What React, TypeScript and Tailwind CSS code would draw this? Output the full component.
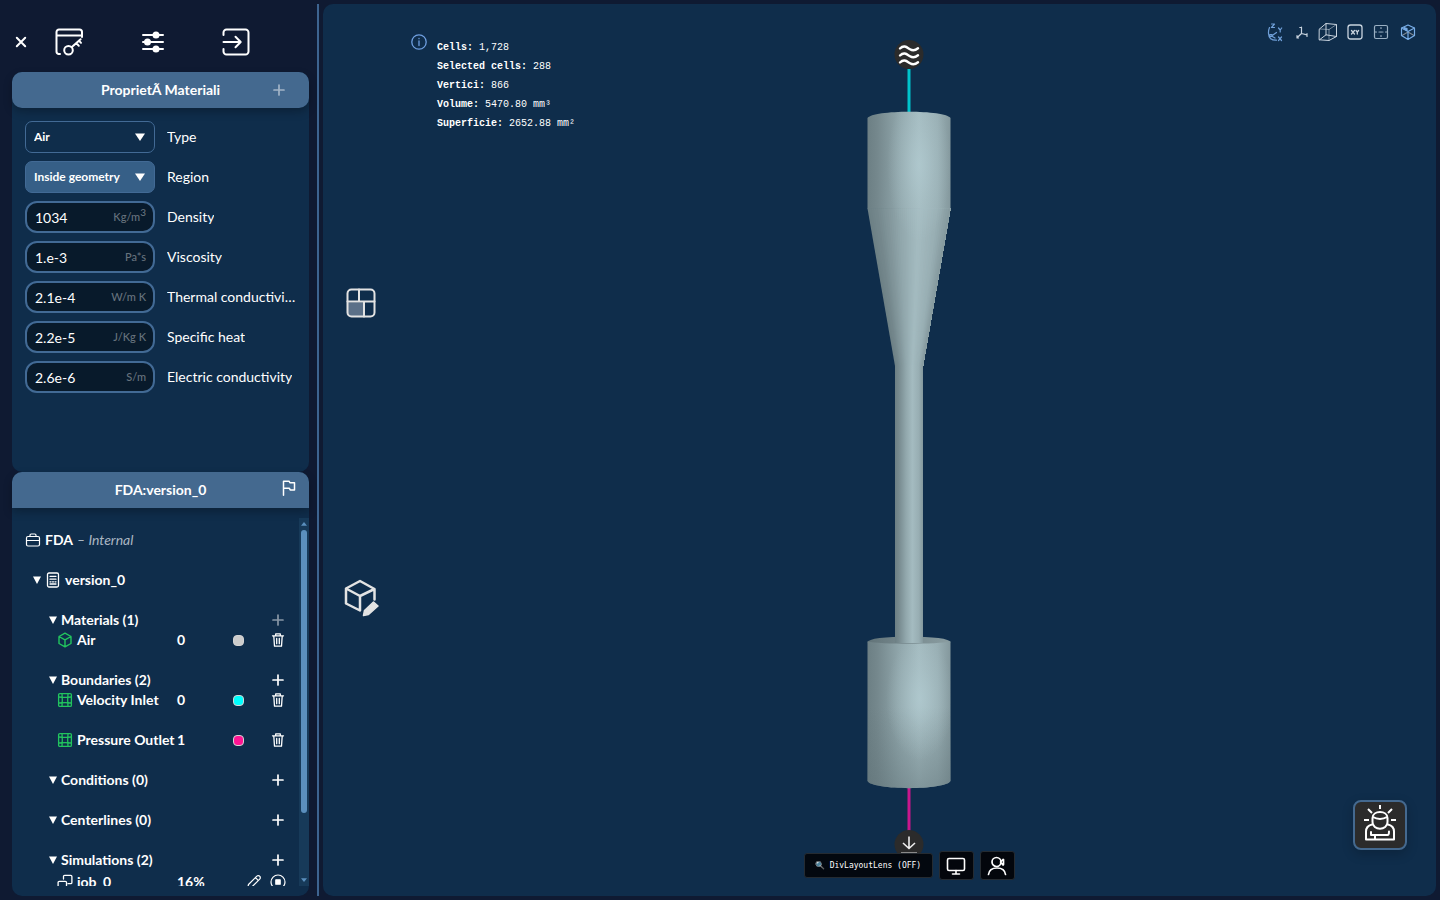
import type { ReactNode } from "react";

type IconProps = { children: ReactNode; box?: string; className?: string; width?: number };

function Icon({ children, box = "0 0 24 24", className = "size-5", width = 2 }: IconProps) {
  return (
    <svg
      viewBox={box}
      className={`shrink-0 ${className}`}
      fill="none"
      stroke="currentColor"
      strokeWidth={width}
      strokeLinecap="round"
      strokeLinejoin="round"
      aria-hidden="true"
    >
      {children}
    </svg>
  );
}

const Plus = ({ className = "size-3" }: { className?: string }) => (
  <Icon box="0 0 12 12" className={className} width={1.7}>
    <path d="M6 1v10M1 6h10" />
  </Icon>
);

const Caret = ({ className = "size-2" }: { className?: string }) => (
  <svg viewBox="0 0 10 8" className={`shrink-0 ${className}`} preserveAspectRatio="none" fill="currentColor" aria-hidden="true">
    <path d="M0 .4h10L5 8z" />
  </svg>
);

const Trash = () => (
  <Icon box="0 0 14 16" className="h-4 w-3.5" width={1.3}>
    <path d="M1.5 3.8h11M4.7 3.6V1.8h4.6v1.8M2.8 4l.7 10.2h7L11.2 4M5.7 6.5v5.2M8.3 6.5v5.2" />
  </Icon>
);

const Cube = () => (
  <Icon box="0 0 16 16" className="size-4" width={1.4}>
    <path d="M8 1.2l6 3.3v7L8 14.8l-6-3.3v-7zM2 4.5l6 3.3 6-3.3M8 7.8v7" />
  </Icon>
);

const Mesh = () => (
  <Icon box="0 0 16 16" className="size-4" width={1.3}>
    <rect x="1.6" y="1.6" width="12.8" height="12.8" rx="1.2" />
    <path d="M5 1.600c.4 4 .4 8.800 0 12.800M11 1.600c-.4 4-.4 8.800 0 12.800M1.600 5c4 .4 8.800.4 12.800 0M1.600 11c4-.4 8.800-.4 12.800 0" />
  </Icon>
);

function Toolbar() {
  return (
    <div className="flex h-[72px] shrink-0 items-center pt-3 text-white">
      <button aria-label="Close" className="flex w-[18px] justify-center">
        <Icon box="0 0 12 12" className="size-3" width={2}>
          <path d="M1.800 1.800l8.400 8.400M10.200 1.800l-8.400 8.400" />
        </Icon>
      </button>
      <nav className="flex items-center">
        <button aria-label="Projects" className="flex w-[77px] justify-center">
          <Icon box="0 0 28 28" className="size-7">
            <path d="M5 26H3.500A2.500 2.500 0 0 1 1.500 23.500V4a2.500 2.500 0 0 1 2.500-2.500h20.500A2.500 2.500 0 0 1 27 4v5M1.500 7.500H27" />
            <circle cx="13.500" cy="22.300" r="4.300" />
            <path d="M16.600 19.200l9-8M21.300 15l2.500 2.800M24 12.600l2 2.200" />
          </Icon>
        </button>
        <button aria-label="Settings" className="flex w-[91px] justify-center">
          <Icon box="0 0 24 24" className="size-6">
            <path d="M2 5h20M2 12h20M2 19h20" />
            <circle cx="15" cy="5" r="2.500" fill="currentColor" />
            <circle cx="6.500" cy="12" r="2.500" fill="currentColor" />
            <circle cx="15" cy="19" r="2.500" fill="currentColor" />
          </Icon>
        </button>
        <button aria-label="Exit" className="flex w-[76px] justify-center">
          <Icon box="0 0 28 28" className="size-7">
            <path d="M1.500 7V4.500a3 3 0 0 1 3-3h19a3 3 0 0 1 3 3v19a3 3 0 0 1-3 3h-19a3 3 0 0 1-3-3V21M1.500 14H18M13.500 8.800l5.200 5.200-5.200 5.200" />
          </Icon>
        </button>
      </nav>
    </div>
  );
}

function SelectRow({ id, label, value, filled }: { id: string; label: string; value: string; filled?: boolean }) {
  return (
    <div className="flex items-center gap-3">
      <div className="relative w-[130px] shrink-0">
        <select
          id={id}
          className={`h-8 w-full appearance-none rounded-[7px] border border-[#426a95] pl-2 text-[12px] font-bold text-white ${
            filled ? "bg-[#365f87]" : "bg-transparent"
          }`}
        >
          <option>{value}</option>
        </select>
        <Caret className="pointer-events-none absolute top-3 right-[10px] h-2 w-2.5 text-white" />
      </div>
      <label htmlFor={id} className="truncate">{label}</label>
    </div>
  );
}

function InputRow({ id, label, value, unit }: { id: string; label: string; value: string; unit: ReactNode }) {
  return (
    <div className="flex items-center gap-3">
      <div className="flex h-8 w-[130px] shrink-0 items-center rounded-[12px] border-2 border-[#426a95] bg-[#081a2b] pr-[7px] pl-2">
        <input id={id} defaultValue={value} className="w-0 min-w-0 flex-1 bg-transparent pt-0.5 text-[14px] text-white outline-none" />
        <span className="text-[11px] font-medium text-[#66727d]">{unit}</span>
      </div>
      <label htmlFor={id} className="truncate">{label}</label>
    </div>
  );
}

function Materials() {
  return (
    <section className="h-[400px] shrink-0 rounded-[10px] bg-[#0f2d4b]">
      <header className="relative flex h-9 items-center justify-center rounded-[10px] bg-[#44698f] shadow-[0_4px_8px_rgba(0,0,0,0.25)]">
        <h2 className="text-[14px] font-bold">ProprietÃ Materiali</h2>
        <button aria-label="Add property" className="absolute right-6 opacity-50"><Plus /></button>
      </header>
      <div className="flex flex-col gap-2 px-[13px] pt-[13px]">
        <SelectRow id="type" label="Type" value="Air" />
        <SelectRow id="region" label="Region" value="Inside geometry" filled />
        <InputRow id="density" label="Density" value="1034" unit={<>Kg/m<sup className="text-[10px]">3</sup></>} />
        <InputRow id="viscosity" label="Viscosity" value="1.e-3" unit="Pa*s" />
        <InputRow id="thermal" label="Thermal conductivity" value="2.1e-4" unit="W/m K" />
        <InputRow id="heat" label="Specific heat" value="2.2e-5" unit="J/Kg K" />
        <InputRow id="electric" label="Electric conductivity" value="2.6e-6" unit="S/m" />
      </div>
    </section>
  );
}

function Group({ title, dim, children }: { title: string; dim?: boolean; children?: ReactNode }) {
  return (
    <li>
      <div className="flex h-5 items-center pr-[15px] pl-[37px]">
        <button className="flex flex-1 items-center gap-1 text-left font-bold">
          <Caret />
          {title}
        </button>
        <button aria-label={`Add to ${title}`} className={dim ? "opacity-50" : ""}><Plus /></button>
      </div>
      {children && <ul className="flex flex-col gap-5">{children}</ul>}
    </li>
  );
}

function Leaf({ icon, name, index, color }: { icon: ReactNode; name: string; index: number; color: string }) {
  return (
    <li className="flex h-5 items-center pr-[14px] pl-[45px] font-bold">
      <span className="text-[#22c55e]">{icon}</span>
      <span className="w-[100px] pl-1 whitespace-nowrap">{name}</span>
      <span className="flex-1 pl-1">{index}</span>
      <span className={`mr-[27px] size-[11px] rounded-[4px] border border-[#d4d4d4] ${color}`} />
      <button aria-label={`Delete ${name}`}><Trash /></button>
    </li>
  );
}

function ProjectTree() {
  return (
    <section className="flex min-h-0 flex-1 flex-col rounded-[10px] bg-[#0f2d4b] pb-2.5">
      <header className="relative flex h-9 shrink-0 items-center justify-center rounded-t-[10px] bg-[#44698f] shadow-[0_4px_8px_rgba(0,0,0,0.25)]">
        <h2 className="text-[14px] font-bold">FDA:version_0</h2>
        <button aria-label="Flag" className="absolute right-3 pb-1">
          <Icon box="0 0 16 16" className="size-4" width={1.500}>
            <path d="M2.500 15.200V1.200h5.700l.7 1.500h4.600v7.200H9.200l-.8-1.600H2.500" />
          </Icon>
        </button>
      </header>
      <div className="mt-2.5 flex min-h-0 flex-1">
        <ul className="flex min-w-0 flex-1 flex-col gap-5 overflow-hidden pt-3">
          <li className="flex h-5 shrink-0 items-center gap-1 pl-3.5">
            <Icon box="0 0 16 16" className="-ml-px size-4" width={1.200}>
              <rect x="1.500" y="4.500" width="13" height="9.500" rx="1.500" />
              <path d="M5 4.300V3.200c0-.8.5-1.200 1.200-1.200h3.600c.7 0 1.200.4 1.200 1.200v1.100M1.500 8.500h13" />
            </Icon>
            <span className="font-bold">FDA</span>
            <em className="text-[#aab6c2]">– Internal</em>
          </li>
          <li className="flex h-5 shrink-0 items-center pl-[21px] font-bold">
            <Caret />
            <Icon box="0 0 16 16" className="mx-1 size-4" width={1.300}>
              <rect x="2.500" y="1" width="11" height="14" rx="1.500" />
              <path d="M5 4.300h6M5 7.200h6M5 9.800h1M7.500 9.800h1M10 9.800h1M5 12h6" />
            </Icon>
            version_0
          </li>
          <Group title="Materials (1)" dim>
            <Leaf icon={<Cube />} name="Air" index={0} color="bg-[#cccccc]" />
          </Group>
          <Group title="Boundaries (2)">
            <Leaf icon={<Mesh />} name="Velocity Inlet" index={0} color="bg-[#00ffff]" />
            <Leaf icon={<Mesh />} name="Pressure Outlet" index={1} color="bg-[#ff1493]" />
          </Group>
          <Group title="Conditions (0)" />
          <Group title="Centerlines (0)" />
          <Group title="Simulations (2)">
            <li className="flex h-6 items-center pr-[13px] pl-[45px] font-bold">
              <Icon box="0 0 16 16" className="size-4" width={1.300}>
                <path d="M6.500 5V2.500A1.200 1.200 0 0 1 7.700 1.300h6a1.200 1.200 0 0 1 1.200 1.200v6a1.200 1.200 0 0 1-1.200 1.200H11M9.500 14V8.500a1.200 1.200 0 0 0-1.200-1.200h-6a1.200 1.200 0 0 0-1.200 1.200V14" />
              </Icon>
              <span className="w-[100px] pl-1">job_0</span>
              <span className="flex-1 pl-1">16%</span>
              <button aria-label="Edit job" className="mr-2">
                <Icon box="0 0 16 16" className="size-4" width={1.200}>
                  <path d="M1.500 14.500l1-4 8.300-8.300a2 2 0 0 1 2.900 0 2 2 0 0 1 0 2.900L5.400 13.400zM9.500 3.700l2.700 2.700" />
                </Icon>
              </button>
              <button aria-label="Stop job">
                <Icon box="0 0 16 16" className="size-4" width={1.200}>
                  <circle cx="8" cy="8" r="7" />
                  <rect x="5.800" y="5.800" width="4.400" height="4.400" fill="currentColor" />
                </Icon>
              </button>
            </li>
          </Group>
        </ul>
        <div className="flex w-2.5 flex-col items-center bg-[#173a59] py-1 text-[#5b8fbd]" aria-hidden="true">
          <Caret className="h-1 w-1.5 rotate-180" />
          <div className="mt-1 h-[283px] w-1.5 shrink-0 rounded-full bg-[#5b8fbd]" />
          <Caret className="mt-auto h-1 w-1.5" />
        </div>
      </div>
    </section>
  );
}

type Shade = { at: number; rgb: [number, number, number] };

const steel: Shade[] = [
  { at: 0, rgb: [108, 127, 132] },
  { at: 0.12, rgb: [117, 136, 141] },
  { at: 0.4, rgb: [146, 168, 173] },
  { at: 0.62, rgb: [164, 187, 192] },
  { at: 0.85, rgb: [152, 174, 179] },
  { at: 1, rgb: [132, 152, 157] },
];

function shadeAt(t: number) {
  const i = Math.max(1, steel.findIndex((s) => s.at >= t));
  const a = steel[i - 1];
  const b = steel[i];
  const k = (t - a.at) / (b.at - a.at);
  const mixed = a.rgb.map((v, c) => Math.round(v + (b.rgb[c] - v) * k));
  return `rgb(${mixed.join(",")})`;
}

const SLICES = 40;

/* Each slice reaches to the right edge and the next one covers it, so the
   shading narrows with the cone and no gap shows between slices. */
function Cone() {
  return (
    <g>
      {Array.from({ length: SLICES }, (_, i) => {
        const t = i / SLICES;
        return (
          <path
            key={i}
            d={`M${867.5 + 83 * t} 208.5H950.5L923 366H${895 + 28 * t}z`}
            fill={shadeAt((i + 0.5) / SLICES)}
          />
        );
      })}
    </g>
  );
}

function Model() {
  const lower = "M867.500 641.500C880 644.500 938 644.500 950.500 641.500V781C946 790.500 872 790.500 867.500 781z";
  const upper = "M867.500 118C872 109.500 946 109.500 950.500 118V209H867.500z";
  return (
    <svg viewBox="382 4 1054 892" className="absolute inset-0 h-full w-full" role="img" aria-label="Nozzle model">
      <defs>
        <linearGradient id="steel">
          {steel.map((s) => (
            <stop key={s.at} offset={s.at} stopColor={`rgb(${s.rgb.join(",")})`} />
          ))}
        </linearGradient>
        <linearGradient id="fade" x1="0" y1="0" x2="0" y2="1">
          <stop offset=".45" stopColor="#5f7277" stopOpacity="0" />
          <stop offset="1" stopColor="#5f7277" stopOpacity=".5" />
        </linearGradient>
        <radialGradient id="glow">
          <stop offset="0" stopColor="#b5cfd5" stopOpacity=".6" />
          <stop offset=".5" stopColor="#b5cfd5" stopOpacity=".25" />
          <stop offset="1" stopColor="#b5cfd5" stopOpacity="0" />
        </radialGradient>
        <linearGradient id="rim">
          <stop offset="0" stopColor="#617378" />
          <stop offset=".35" stopColor="#728489" />
          <stop offset="1" stopColor="#8a9da1" />
        </linearGradient>
        <clipPath id="bodies">
          <path d={upper} />
          <path d="M867.500 208H950.500L923 366H895z" />
          <path d={lower} />
        </clipPath>
      </defs>
      <path d="M909 69v46" stroke="#00c3cc" strokeWidth="3" />
      <path d="M909 786v46" stroke="#c9178c" strokeWidth="3" />
      <path d={upper} fill="url(#steel)" />
      <Cone />
      <ellipse cx="909" cy="642" rx="41.500" ry="5.500" fill="url(#rim)" />
      <path d={lower} fill="url(#steel)" />
      <path d={lower} fill="url(#fade)" />
      <g clipPath="url(#bodies)">
        <ellipse cx="919" cy="165" rx="32" ry="75" fill="url(#glow)" />
        <ellipse cx="920" cy="698" rx="34" ry="62" fill="url(#glow)" />
      </g>
      <path d="M895 365H923V643H895z" fill="url(#steel)" />
      <circle cx="909" cy="54.500" r="14.500" fill="#2b2b2b" />
      <path
        d="M900 48.500c4-4 7-1 10 .7 3 1.800 5 1.500 8-.9M900 55.500c4-4 7-1 10 .7 3 1.800 5 1.500 8-.9M900 62.500c4-4 7-1 10 .7 3 1.800 5 1.500 8-.9"
        stroke="#fff"
        strokeWidth="2.400"
        fill="none"
        strokeLinecap="round"
      />
      <circle cx="909" cy="844.500" r="14.500" fill="#2b2b2b" />
      <path d="M909 836.500v12M903 843l6 5.500 6-5.500" stroke="#eee" strokeWidth="1.600" fill="none" />
      <path d="M901 852.500h16" stroke="#8a8a8a" strokeWidth="1" />
    </svg>
  );
}

function ViewTools() {
  return (
    <div className="absolute top-[18px] right-[18px] flex w-[153px] justify-between text-[#c8d3de]">
      <button aria-label="Axes" className="text-[#6f9fd8]">
        <Icon box="0 0 20 20" width={1.200}>
          <path d="M6.500 2h3l-3 3.500h3M13.500 6l1.700 2 1.500-2M15.200 8v2M13.500 15l3 3.500M16.500 15l-3 3.500M4.500 5.500C3 9 3 14 5.500 16.500c2 1.700 4 1.800 6 1.700M6.500 14l5-3.500M6.500 14l3.500 2M5 12.500h2v2H5z" />
        </Icon>
      </button>
      <button aria-label="Origin">
        <Icon box="0 0 20 20" width={1.200}>
          <path d="M9.500 5v6.500l5.500 1.300M9.500 11.500l-4 3.800M7.800 5.500h1M15 11.500v3M5 13.500v2.500h1.500" />
        </Icon>
      </button>
      <button aria-label="Bounding box">
        <Icon box="0 0 20 20" width={1}>
          <path d="M1.500 7L8 1.500l10.500 1v12L11 18.500l-9.500-.7zM8 1.500v11.300M1.500 17.800L8 12.800l10.500 1.700" />
          <path d="M1.500 7l9.500.5 7.500-5M11 7.500v11" opacity=".55" />
        </Icon>
      </button>
      <button aria-label="XY plane">
        <Icon box="0 0 20 20" width={1.300}>
          <rect x="3" y="3" width="14" height="14" rx="2.500" />
          <path d="M6.500 8.500l3 3.500M9.500 8.500l-3 3.500M11 8.500l1.300 1.600 1.300-1.600M12.300 10v2" />
        </Icon>
      </button>
      <button aria-label="Section" className="text-[#9aafc2]">
        <Icon box="0 0 20 20" width={1.200}>
          <rect x="3.500" y="3.500" width="13" height="13" rx="1.500" />
          <path d="M10 5.500v1M10 9.500v1M10 13.500v1M4 10h1.500M8 10h.5M11.500 10h.5M14.500 10H16" />
        </Icon>
      </button>
      <button aria-label="Solid view" className="text-[#79aee8]">
        <Icon box="0 0 20 20" width={1.200}>
          <path d="M4 13.500l6-3.500 6 3.500" stroke="#7d8791" />
          <path d="M10 3l6.500 3v7.500L10 17.500l-6.500-4V6zM3.500 6L10 9.500 16.500 6M10 9.500v8" />
          <path d="M6 5.500l3 1v2l-3-1.500z" fill="currentColor" />
        </Icon>
      </button>
    </div>
  );
}

const stats: { label: string; value: string }[] = [
  { label: "Cells:", value: "1,728" },
  { label: "Selected cells:", value: "288" },
  { label: "Vertici:", value: "866" },
  { label: "Volume:", value: "5470.80 mm³" },
  { label: "Superficie:", value: "2652.88 mm²" },
];

function Viewer() {
  return (
    <main className="flex min-w-0 flex-1 rounded-[10px] bg-[#0f2d4b]">
      <div className="flex w-[59px] shrink-0 flex-col items-center justify-center gap-[261px] pt-1 pl-4 text-[#e3e3e3]">
        <button aria-label="Layout">
          <Icon box="0 0 30 30" className="size-[30px]" width={2}>
            <path d="M2 14.500h15V28H5a3 3 0 0 1-3-3z" fill="#5b7088" stroke="none" />
            <rect x="1.500" y="1.500" width="27" height="27" rx="4" />
            <path d="M1.500 13.500h27M13 1.500v12M18 13.500v15" />
          </Icon>
        </button>
        <button aria-label="Edit geometry">
          <Icon box="0 0 36 38" className="h-[38px] w-9" width={2.500}>
            <path d="M31.500 20.500V10L17 2 3 9.500v15L17 31.500V17M3 9.500L17 17l14.500-7" />
            <path d="M20.500 36.500l1-5 9-8.500 4.500 4-9.500 8.500z" fill="currentColor" strokeWidth="1.500" />
          </Icon>
        </button>
      </div>
      <div className="relative min-w-0 flex-1">
        <Model />
        <div className="absolute top-[30px] left-[29px] flex gap-2.5">
          <Icon box="0 0 16 16" className="size-4 text-[#6f9fe0]" width={1.300}>
            <circle cx="8" cy="8" r="7.200" />
            <path d="M8 7v4.500M8 4.500v.2" />
          </Icon>
          <dl className="pt-1 font-['Liberation_Mono',monospace] text-[10px] leading-[19px]">
            {stats.map((s) => (
              <div key={s.label} className="flex gap-1.5">
                <dt className="font-bold">{s.label}</dt>
                <dd>{s.value}</dd>
              </div>
            ))}
          </dl>
        </div>
        <ViewTools />
        <div className="absolute inset-x-0 bottom-4 flex items-center justify-center gap-1.5">
          <button className="h-[25px] w-[129px] rounded-[3px] border border-[#252b31] bg-[#03060c]/95 font-['DejaVu_Sans_Mono',monospace] text-[8px] whitespace-nowrap">
            🔍 DivLayoutLens (OFF)
          </button>
          <button aria-label="Desktop" className="flex h-[29px] w-[35px] items-center justify-center rounded-[3px] border border-[#252b31] bg-[#03060c]">
            <Icon box="0 0 20 20" width={1.600}>
              <rect x="1.500" y="2.500" width="17" height="12" rx="1.500" />
              <path d="M10 14.500V18M6.500 18h7" />
            </Icon>
          </button>
          <button aria-label="User" className="flex h-[29px] w-[35px] items-center justify-center rounded-[3px] border border-[#252b31] bg-[#03060c]">
            <Icon box="0 0 20 20" width={1.700}>
              <circle cx="9.500" cy="6" r="4.500" />
              <path d="M1.500 18.500c.5-4 3.700-6.500 8.500-6.500s8 2.500 8.500 6.500M16 3.500L13.500 6l2.500 3M16.500 3.500v5" />
            </Icon>
          </button>
        </div>
        <button
          aria-label="Lighting"
          className="absolute right-[29px] bottom-[46px] flex h-[50px] w-[54px] items-center justify-center rounded-[8px] border-2 border-[#44698f] bg-[#2b2b2b] pb-1 shadow-[0_4px_12px_rgba(0,0,0,0.2)]"
        >
          <Icon box="0 0 36 38" className="h-[38px] w-9" width={2}>
            <path d="M10.500 14c0-8 15-8 15 0v4c0 9-15 9-15 0zM11 13c4 2.500 10 2.500 14 0M10 20.500c-4 1-6 3-6 7v8h28v-8c0-4-2-6-6-7" />
            <path d="M9 28v3h16.500c1.500 0 1.500-2 1.500-3.500M9 31h4v4" />
            <path d="M18 1v4M6 5l4 4M30 5l-4 4M2 16h5M29 16h5" strokeLinecap="butt" />
          </Icon>
        </button>
      </div>
    </main>
  );
}

export default function App() {
  return (
    <div className="flex h-screen min-h-[700px] bg-[#0f1a32] py-1 pr-1 font-['Lato',sans-serif] text-[14px] leading-5 text-white">
      <aside className="-mt-1 flex w-[317px] shrink-0 flex-col pr-2 pl-3">
        <Toolbar />
        <Materials />
        <ProjectTree />
      </aside>
      <div className="mr-1 w-0.5 shrink-0 bg-[#3d6490]" />
      <Viewer />
    </div>
  );
}
